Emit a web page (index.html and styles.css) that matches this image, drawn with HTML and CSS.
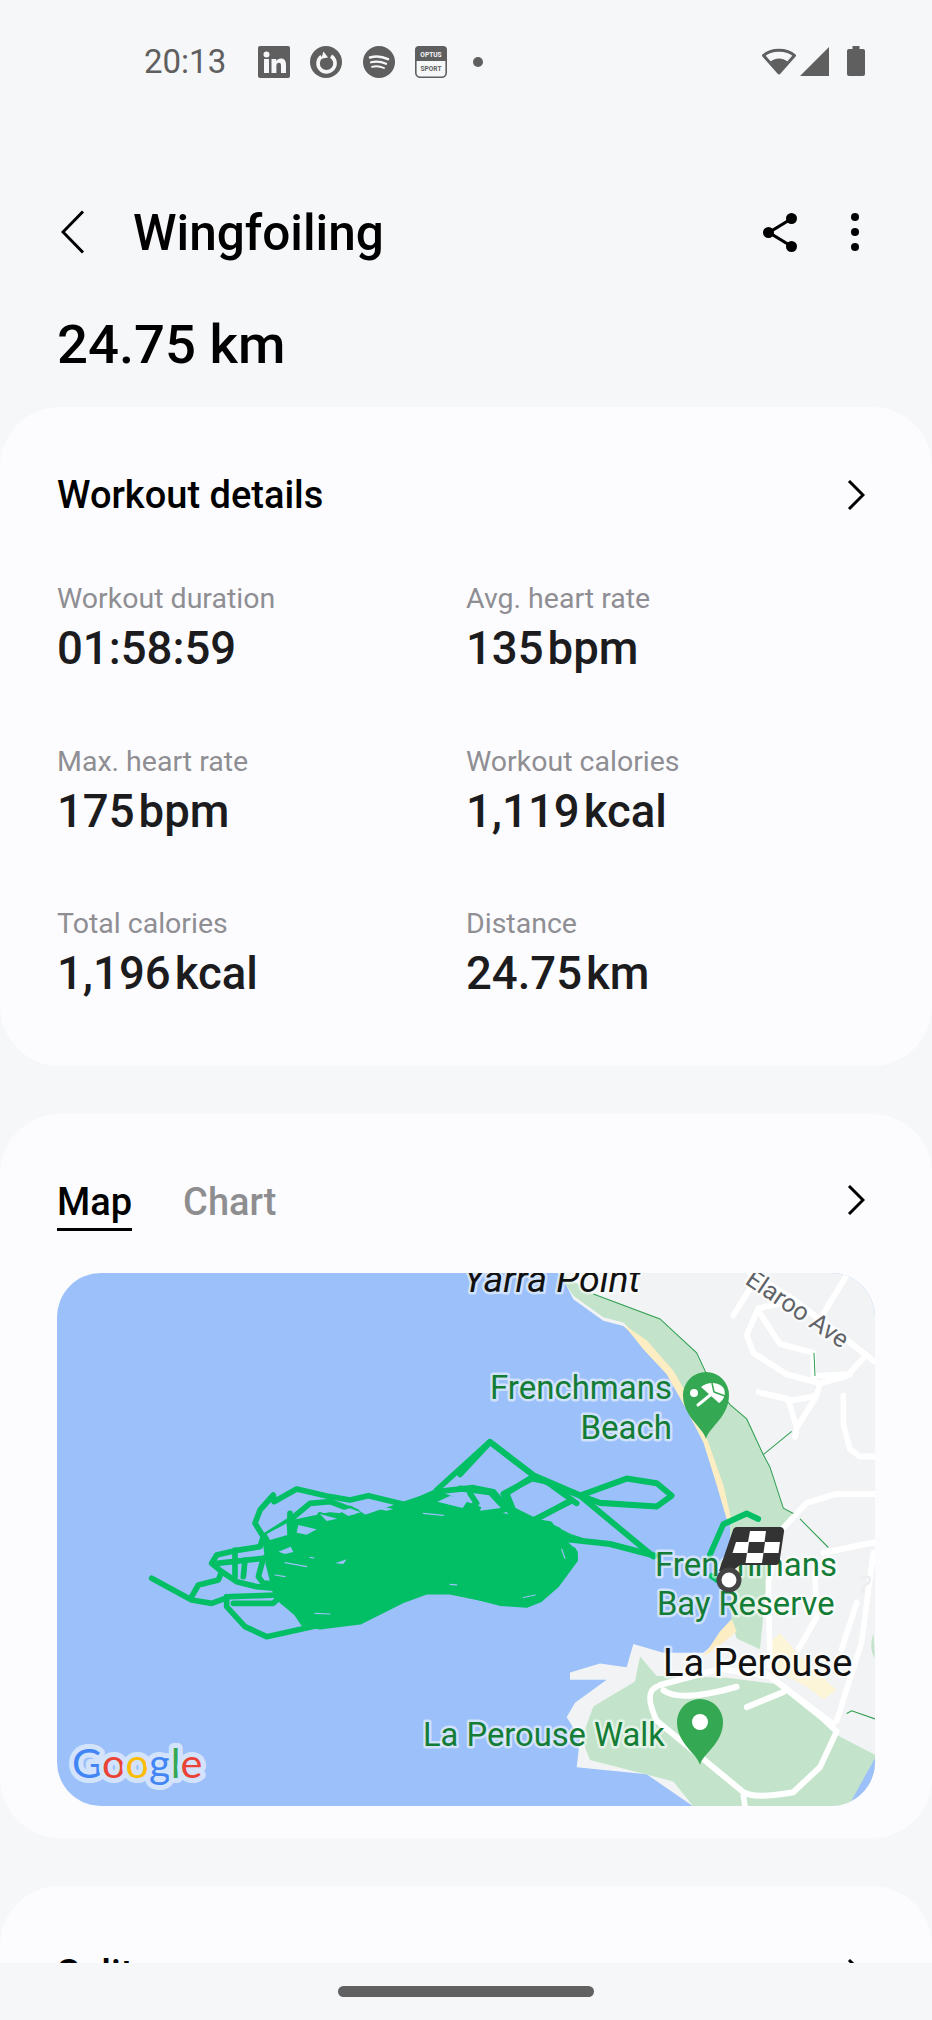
FILE: index.html
```html
<!DOCTYPE html>
<html lang="en">
<head>
<meta charset="utf-8">
<title>Wingfoiling</title>
<link rel="stylesheet" href="styles.css">
</head>
<body>
<div class="screen">
  <div class="scroll">
    <header class="status">
      <div class="status-left">
        <span class="time">20:13</span>
        <svg class="ni" viewBox="0 0 32 32"><rect width="32" height="32" rx="2" fill="#5f5f5f"/><circle cx="8.500" cy="8.500" r="3" fill="#f6f7f9"/><rect x="6" y="13" width="5" height="14" fill="#f6f7f9"/><path d="M13.500 13h4.700v2c1-1.500 2.700-2.400 4.600-2.400 4 0 5.200 2.500 5.200 6.300V27h-5v-7.200c0-1.800-.5-3-2.100-3-1.900 0-2.500 1.400-2.500 3.200v7h-4.900z" fill="#f6f7f9"/></svg>
        <svg class="ni" viewBox="0 0 32 32"><circle cx="16" cy="16" r="16" fill="#5f5f5f"/><path d="M11.500 10.500a8.500 8.500 0 1 0 9.500-.4" fill="none" stroke="#f6f7f9" stroke-width="3.600"/><path d="M13.500 5.500l4.500 6-6.800 1.300z" fill="#f6f7f9"/></svg>
        <svg class="ni" viewBox="0 0 32 32"><circle cx="16" cy="16" r="16" fill="#5f5f5f"/><g fill="none" stroke="#f6f7f9" stroke-linecap="round"><path d="M7 11.500c6-1.700 12-1.200 18 1.700" stroke-width="2.600"/><path d="M8 16.300c5-1.300 10-.9 15 1.500" stroke-width="2.200"/><path d="M9 20.800c4-1 8-.7 12 1.200" stroke-width="1.900"/></g></svg>
        <svg class="ni" viewBox="0 0 32 32"><rect x=".8" y=".8" width="30.400" height="30.400" rx="4.500" fill="#f6f7f9" stroke="#5f5f5f" stroke-width="1.600"/><path d="M4 0h24a4 4 0 0 1 4 4v11H0V4a4 4 0 0 1 4-4z" fill="#5f5f5f"/><text class="ni-t ni-a" x="16" y="10.500">OPTUS</text><text class="ni-t ni-b" x="16" y="25">SPORT</text></svg>
        <span class="ndot"></span>
      </div>
      <div class="status-right">
        <svg class="wifi" viewBox="0 0 34 28"><path d="M1.500 8.500C9 1.500 25 1.500 32.500 8.500L17 26z" fill="none" stroke="#5f5f5f" stroke-width="3" stroke-linejoin="round"/><path d="M8.500 14.500c5-4 12-4 17 0L17 25z" fill="#5f5f5f"/></svg>
        <svg class="sig" viewBox="0 0 29 29"><path d="M29 0v29H0z" fill="#5f5f5f"/></svg>
        <svg class="bat" viewBox="0 0 18 30"><path d="M5.500 0h7v3H16a2 2 0 0 1 2 2v23a2 2 0 0 1-2 2H2a2 2 0 0 1-2-2V5a2 2 0 0 1 2-2h3.500z" fill="#5f5f5f"/></svg>
      </div>
    </header>

    <div class="appbar">
      <svg class="back" viewBox="0 0 24 44"><path d="M22 1.500L2 22l20 20.500" fill="none" stroke="#000" stroke-width="3"/></svg>
      <h1 class="title">Wingfoiling</h1>
      <svg class="share" viewBox="0 0 34 39"><path d="M28 6L6 19.500 28 33" fill="none" stroke="#000" stroke-width="3.200"/><circle cx="28.500" cy="5.500" r="5.500" fill="#000"/><circle cx="5.500" cy="19.500" r="5.500" fill="#000"/><circle cx="28.500" cy="33.500" r="5.500" fill="#000"/></svg>
      <div class="more"><i></i><i></i><i></i></div>
    </div>

    <div class="headline">24.75 km</div>

    <section class="card card-details">
      <div class="card-head">
        <h2 class="card-title">Workout details</h2>
        <svg class="chev" viewBox="0 0 18 30"><path d="M2 1l14 14L2 29" fill="none" stroke="#000" stroke-width="3"/></svg>
      </div>
      <div class="stats">
        <div class="stat"><div class="lab">Workout duration</div><div class="val">01:58:59</div></div>
        <div class="stat"><div class="lab">Avg. heart rate</div><div class="val">135<span class="unit">bpm</span></div></div>
        <div class="stat"><div class="lab">Max. heart rate</div><div class="val">175<span class="unit">bpm</span></div></div>
        <div class="stat"><div class="lab">Workout calories</div><div class="val">1,119<span class="unit">kcal</span></div></div>
        <div class="stat"><div class="lab">Total calories</div><div class="val">1,196<span class="unit">kcal</span></div></div>
        <div class="stat"><div class="lab">Distance</div><div class="val">24.75<span class="unit">km</span></div></div>
      </div>
    </section>

    <section class="card card-map">
      <div class="card-head tabs-head">
        <div class="tabs">
          <span class="tab tab-on">Map</span>
          <span class="tab">Chart</span>
        </div>
        <svg class="chev" viewBox="0 0 18 30"><path d="M2 1l14 14L2 29" fill="none" stroke="#000" stroke-width="3"/></svg>
      </div>
      <div class="map">
        <svg class="map-svg" viewBox="57 1273 818 533">
          <rect class="water" x="57" y="1273" width="818" height="533"/>
          <g transform="translate(460 1260) scale(.33333 .35714)">
            <path class="land" d="M280 0L340 110L430 170L490 185L560 240L630 310L680 380L740 510L790 640L810 730L815 1010L780 1060L730 1100L610 1100L520 1075L500 1140L420 1130L330 1155L330 1175L440 1175L345 1240L320 1280L360 1340L350 1420L560 1440L700 1530L1250 1530L1250 0z"/>
            <path class="green" d="M290 30L340 100L430 160L490 175L560 240L630 310L680 380L740 510L790 640L810 730L815 1010L830 1060L900 1090L925 850L1000 710L970 695L930 580L910 545L860 445L810 405L740 320L710 260L600 165L400 95z"/>
            <path class="green" d="M590 1165L540 1110L525 1180L400 1250L365 1340L390 1400L640 1460L700 1530L1150 1530L1245 1470L1245 1385L1130 1330L1100 1290L970 1190L800 1170z"/>
            <path class="sand" d="M490 180L560 225L640 310L690 390L745 510L790 630L815 730L800 725L770 630L730 510L680 420L620 320L550 250zM815 1005L830 1040L790 1070L730 1110L780 1040z"/>
            <path class="sand pale" d="M960 1045L1020 1110L1130 1205L1090 1230L1040 1195L990 1170L920 1130L925 1075z"/>
            <path class="park" d="M1240 1045q-15 45 5 70z"/>
            <path class="water" d="M1245 1395L1200 1470L1165 1530L1245 1530z"/>
            <g class="road">
              <path d="M820 155L900 35M1090 150L1165 35M870 35L1000 110L1245 285"/>
              <path d="M1000 115L895 135L860 210L880 260L980 320L1080 345L1160 325L1210 275M900 150L960 235L1060 260L1060 325L1170 320"/>
              <path d="M1080 345L1070 380L1010 470L985 390L895 370M1010 470L1005 495M1070 380L985 395M1150 380L1150 460L1170 530L1200 550L1245 550"/>
              <path d="M930 1140L925 900L960 760L1040 680L1130 655L1245 655M1090 820L1245 790M1065 880L1070 1000L1015 1090M1190 960L1145 1090M1240 820L1205 1070L1130 1290"/>
              <path d="M590 1195Q550 1210 590 1290L720 1390L850 1490Q880 1510 1000 1490L1080 1420L1130 1320L1090 1285L930 1165L780 1145L600 1190M610 1205Q660 1240 830 1195M860 1252L970 1210M850 1500L855 1530"/>
              <path d="M920 1160L1120 1300"/>
            </g>
            <path class="road thin" d="M1205 890q35-10 20 15q-25 10-15 25"/>
            <path class="trail" d="M400 95L600 165L710 260L740 320L810 405L860 445L910 545L930 580L970 695L1000 710M1020 725L1105 805M910 545L995 480M1062 260L1065 325M1160 1270L1175 1262L1245 1285"/>
          </g>

          <text class="lbl lbl-black halo" x="463" y="1292" font-size="37.500" font-style="italic">Yarra Point</text>
          <text class="lbl lbl-grey halo" font-size="25" transform="translate(744 1283) rotate(34)">Elaroo Ave</text>

          <g transform="translate(130 1440) scale(.33333)" class="track">
            <path class="blob" d="M405 290L480 250L600 225L700 235L830 190L920 160L1080 220L1250 255L1285 270L1310 330L1290 420L1220 470L1130 490L960 455L890 455L820 480L690 545L570 560L520 550L500 520L440 470L415 370z"/>
            <path d="M65 415L185 480L245 490L300 470L440 465"/>
            <path d="M185 470L205 435L265 420L275 395L245 370L260 345L315 332L390 320L400 290L375 250L390 210L430 165L432 185L500 147L600 170L660 180L715 167L830 195L920 155L1030 143L1090 155L1140 215L1210 240L1320 185"/>
            <path d="M290 470L290 500L345 560L410 590L570 555"/>
            <path d="M920 150L1080 5L1210 105L1350 165"/>
            <path d="M1130 160L1200 115L1250 125L1340 190"/>
            <path d="M1130 160L1150 210L1210 240"/>
            <path d="M260 370L400 355L480 320"/>
            <path d="M275 395L320 425L380 440L440 445"/>
            <path d="M315 330L315 410"/>
            <path d="M345 360L340 410"/>
            <path d="M400 355L385 410L400 430L440 430"/>
            <path d="M310 490L430 490L450 470"/>
            <path d="M400 290L480 240L540 190L600 185L680 215"/>
            <path d="M480 220L480 290L530 300L580 265"/>
            <path d="M570 225L620 240L660 205L700 230"/>
            <path d="M920 190L1000 215L1040 190L1020 160"/>
            <path d="M1040 220L1120 210"/>
            <path d="M1250 255L1320 290L1350 300"/>
            <path d="M1300 320L1330 330L1335 360L1295 390"/>
            <path class="hole" d="M505 255L560 268L530 284L500 278z"/>
            <path class="hole" d="M570 222L622 236L590 243z"/>
            <path class="hole" d="M630 213L660 205L692 217L655 228z"/>
            <path class="hole" d="M705 190L790 207L770 212L712 200z"/>
            <path class="hole" d="M922 185L960 168L1018 175L998 204z"/>
            <path class="hole" d="M1078 232L1140 225L1155 246L1100 252z"/>
            <path class="hole" d="M1055 168L1090 165L1118 203L1050 212L1058 190z"/>
            <path class="hole" d="M445 335L482 320L490 336L465 342z"/>
            <path class="hole" d="M410 282L470 250L472 285L420 300z"/>
            <path class="hole" d="M615 370L650 358L640 372z"/>
            <path class="hole" d="M1180 470L1215 460L1205 470z"/>
            <path class="slit" d="M960 433L1080 443M465 368L530 380M555 520L600 522M1200 278L1240 284M435 405L465 410M880 220L940 226M540 352L552 354"/>
          </g>
          <g transform="translate(460 1260) scale(.33333 .35714)" class="track">
            <path class="blob-r" d="M0 710L100 715L270 740L300 780L345 820L345 840L290 910L240 950L200 965L120 960L0 930z"/>
            <path d="M0 600L90 510L230 610L360 660L580 830"/>
            <path d="M360 660L500 612L590 625L635 660L590 690L420 680L360 660"/>
            <path d="M130 655L220 610M130 655L155 710L220 730L330 675"/>
            <path d="M300 780L450 795L585 828"/>
            <path d="M0 640L90 650L130 690"/>
            <path d="M750 825L790 740L860 710L895 725"/>
            <path d="M755 885L785 905"/>
            <path class="slit" d="M305 810L315 835M190 945L225 938"/>
          </g>

          <text class="lbl lbl-green halo" x="672" y="1399" font-size="33" text-anchor="end">Frenchmans</text>
          <text class="lbl lbl-green halo" x="672" y="1439" font-size="33" text-anchor="end">Beach</text>
          <text class="lbl lbl-green halo" x="655" y="1576" font-size="33">Frenchmans</text>
          <text class="lbl lbl-green halo" x="657" y="1615" font-size="32.700">Bay Reserve</text>
          <text class="lbl lbl-black halo" x="663" y="1676" font-size="38">La Perouse</text>
          <text class="lbl lbl-green halo" x="423" y="1746" font-size="32.700">La Perouse Walk</text>

          <path class="pin" d="M706 1439c-3-12-23-22-23-44a23 23 0 0 1 46 0c0 22-20 32-23 44z"/>
          <circle class="pin-w" cx="694" cy="1393" r="4"/>
          <path class="pin-w" d="M701 1387C708 1381 720 1382 724 1389C726 1394 724 1400 719 1403z"/>
          <path class="pin-l" d="M714 1392L698 1405"/>
          <path class="pin-g" d="M714 1392L712 1383M714 1392L725 1396"/>
          <path class="pin" d="M700 1765c-3-12-23-21-23-43a23 23 0 0 1 46 0c0 22-20 31-23 43z"/>
          <circle class="pin-w" cx="700" cy="1722" r="8"/>

          <g class="flag">
            <path class="flag-bg" d="M738 1527h42a4 4 0 0 1 4 4.500l-4.500 30a4 4 0 0 1-4 3.500H740l-12 9-9-3 14-41a4.500 4.500 0 0 1 5-3z"/>
            <path class="flag-w" d="M750 1531h16l-1.500 11h-16.500zM736 1542h13l-1.500 11h-15zM765 1542h15l-1.500 11h-15zM747 1553h16.500l-1.500 10h-16.500z"/>
            <circle class="flag-dot" cx="729" cy="1580" r="10"/>
          </g>

          <text class="google" x="72" y="1778"><tspan class="g-b">G</tspan><tspan class="g-r">o</tspan><tspan class="g-y">o</tspan><tspan class="g-b">g</tspan><tspan class="g-g">l</tspan><tspan class="g-r">e</tspan></text>
        </svg>
      </div>
    </section>

    <section class="card card-splits">
      <div class="card-head">
        <h2 class="card-title">Splits</h2>
        <svg class="chev" viewBox="0 0 18 30"><path d="M2 1l14 14L2 29" fill="none" stroke="#000" stroke-width="3"/></svg>
      </div>
    </section>
  </div>
  <nav class="navbar"><span class="pill"></span></nav>
</div>
</body>
</html>
```

FILE: styles.css
```css
* { box-sizing: border-box; }
html, body { margin: 0; padding: 0; background: #f6f7f9; }
body { font-family: Roboto, "Liberation Sans", sans-serif; }
h1, h2 { margin: 0; }

.screen { width: 932px; height: 2020px; display: flex; flex-direction: column; overflow: hidden; background: #f6f7f9; }
.scroll { flex: 1 1 auto; min-height: 0; overflow: hidden; }

/* status bar */
.status { height: 188px; padding: 46px 67px 0 144px; display: flex; justify-content: space-between; align-items: flex-start; }
.status-left { display: flex; align-items: center; height: 32px; }
.time { font-size: 33px; line-height: 32px; color: #5f5f5f; width: 114px; }
.ni { width: 32px; height: 32px; margin-right: 20.300px; display: block; }
.ni-t { font-family: Roboto, sans-serif; font-weight: 700; font-size: 6.600px; text-anchor: middle; }
.ni-a { fill: #f6f7f9; }
.ni-b { fill: #5f5f5f; }
.ndot { width: 10px; height: 10px; border-radius: 50%; background: #5f5f5f; margin-left: 6px; }
.status-right { display: flex; align-items: flex-start; }
.wifi { width: 34px; height: 28px; margin-top: 1px; }
.sig { width: 29px; height: 29px; margin-left: 4px; margin-top: 1px; }
.bat { width: 18px; height: 30px; margin-left: 18px; }

/* app bar */
.appbar { height: 90px; display: flex; align-items: center; padding: 0 0 0 61px; }
.back { width: 24px; height: 44px; margin: 0 48px 2px 0; }
.title { font-size: 49.500px; font-weight: 500; color: #000; flex: 1; line-height: 58px; }
.share { width: 34px; height: 39px; margin: 0 54px 2px 0; }
.more { width: 8px; margin: 0 73px 2px 0; display: flex; flex-direction: column; gap: 7px; }
.more i { display: block; width: 8px; height: 8px; border-radius: 50%; background: #000; }

.headline { font-size: 54.500px; font-weight: 500; color: #000; line-height: 62px; padding: 35px 0 0 57px; height: 129px; }

/* cards */
.card { background: #fcfcff; border-radius: 60px; margin-bottom: 48px; padding: 0 57px; }
.card-details { height: 659px; }
.card-map { height: 724px; }
.card-splits { height: 300px; }
.card-head { height: 175px; display: flex; justify-content: space-between; align-items: center; }
.card-title { font-size: 38px; font-weight: 500; color: #000; line-height: 44px; }
.chev { width: 18px; height: 30px; margin-right: 10px; }

.stats { display: grid; grid-template-columns: 409px 1fr; grid-auto-rows: 162.500px; }
.lab { font-size: 28.500px; line-height: 34px; color: #8e8e93; }
.val { font-size: 45.500px; line-height: 50px; font-weight: 500; color: #1c1c1e; margin-top: 8px; }
.unit { margin-left: 4px; }

/* map card */
.tabs-head { height: 159px; padding: 62px 0 0; align-items: flex-start; }
.tabs { display: flex; gap: 51px; }
.tab { font-size: 38px; font-weight: 500; line-height: 52px; color: #8e8e90; height: 52px; }
.tab-on { color: #000; border-bottom: 3px solid #000; height: 55px; }
.tabs-head .chev { margin-top: 9px; }
.map { width: 818px; height: 533px; border-radius: 44px; overflow: hidden; }
.map-svg { display: block; width: 818px; height: 533px; }
.water { fill: #9cc0f9; }
.land { fill: #f1f3f4; }
.green { fill: #c3e4ca; }
.park { fill: #c3e4ca; }
.sand { fill: #fcedc3; }
.sand.pale { fill: #fdf5d8; }
.road { fill: none; stroke: #fff; stroke-width: 17; stroke-linecap: round; stroke-linejoin: round; }
.road.thin { stroke: #eceeef; stroke-width: 8; }
.trail { fill: none; stroke: #2e9e50; stroke-width: 3; }
.track path { fill: none; stroke: #02bf65; stroke-width: 17; stroke-linejoin: round; stroke-linecap: round; }
.track .blob, .track .blob-r { fill: #02bf65; }
.track .slit { stroke: #9cc0f9; stroke-width: 3.500; }
.track .hole { fill: #9cc0f9; stroke: none; }

.lbl { font-family: Roboto, sans-serif; }
.lbl-green { fill: #137c35; }
.lbl-black { fill: #111; }
.lbl-grey { fill: #5f6368; }
.halo { paint-order: stroke; stroke: rgba(255,255,255,.55); stroke-width: 5px; stroke-linejoin: round; }

.pin { fill: #34a853; }
.pin-w { fill: #fff; }
.pin-l { fill: none; stroke: #fff; stroke-width: 3; stroke-linecap: round; }
.pin-g { fill: none; stroke: #34a853; stroke-width: 1.500; }

.flag-bg { fill: #333; }
.flag-w { fill: #fff; }
.flag-dot { fill: #fff; stroke: #444; stroke-width: 5; }

.google { font-family: Lato, "Open Sans", sans-serif; font-size: 41.500px; font-weight: 400; paint-order: stroke; stroke: #d4e3fc; stroke-width: 10px; stroke-linejoin: round; }
.g-b { fill: #4285f4; }
.g-r { fill: #ea4335; }
.g-y { fill: #fbbc05; }
.g-g { fill: #34a853; }

/* nav */
.navbar { flex: 0 0 57px; background: #f6f7f9; display: flex; justify-content: center; padding-top: 23px; }
.pill { width: 256px; height: 11px; border-radius: 6px; background: #616161; display: block; }
```
